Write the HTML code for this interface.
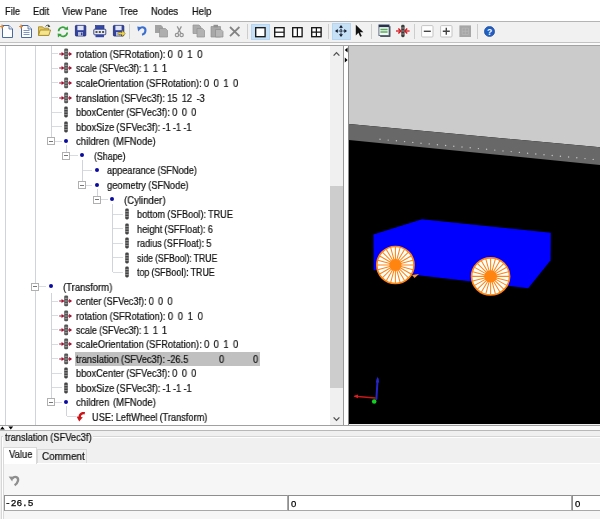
<!DOCTYPE html>
<html><head><meta charset="utf-8"><title>X3D-Edit</title>
<style>
html,body{margin:0;padding:0}
body{width:600px;height:519px;overflow:hidden;background:#f0f0f0;position:relative;font-family:"Liberation Sans",sans-serif;color:#000}
.abs{position:absolute}
.t{-webkit-text-stroke:.22px #111;will-change:transform;position:absolute;white-space:pre;font-size:10.6px;line-height:14px;height:14px;transform-origin:0 50%;transform:scaleX(0.875);color:#111}
.m{-webkit-text-stroke:.22px #111;will-change:transform;position:absolute;white-space:pre;font-size:10.5px;line-height:14px;height:14px;top:3.6px;transform-origin:0 50%;transform:scaleX(.895);color:#111}
.vl{position:absolute;width:1px;background:#d0d4da}
.hl{position:absolute;height:1px;background:#d8dbe0}
.ex{position:absolute;width:6px;height:6px;border:1px solid #b0b0b0;background:#fff}
.ex i{position:absolute;left:1px;top:2.5px;width:4px;height:1px;background:#777}
.bl{position:absolute;width:4px;height:4px;border-radius:50%;background:#0a0aa0}
</style></head>
<body>
<div class="abs" style="left:0;top:0;width:600px;height:21px;background:#fff"></div>
<span class="m" style="left:5px">File</span>
<span class="m" style="left:33px">Edit</span>
<span class="m" style="left:62px">View Pane</span>
<span class="m" style="left:119px">Tree</span>
<span class="m" style="left:151px">Nodes</span>
<span class="m" style="left:192px">Help</span>
<div class="abs" style="left:0;top:21px;width:600px;height:1px;background:#b4b4b4"></div>
<div class="abs" style="left:0;top:22px;width:600px;height:20px;background:#f1f1f1"></div>
<div class="abs" style="left:0;top:42px;width:600px;height:1px;background:#c2c2c2"></div>
<div class="abs" style="left:0;top:43px;width:600px;height:2px;background:#fafafa"></div>
<div class="abs" style="left:0;top:45px;width:600px;height:1px;background:#a2a2a2"></div>
<svg class="abs" style="left:0px;top:24.1px" width="14" height="15" viewBox="0 0 14 15"><path d="M2.5 1.5H9L12.5 5V13.5H2.5Z" fill="#fdfdff" stroke="#4a6a9c" stroke-width="1"/><path d="M9 1.5V5H12.5" fill="#dfe8f6" stroke="#4a6a9c" stroke-width=".8"/><path d="M0 2.5H4M2 .5V4.5" stroke="#e08a3c" stroke-width="1.2"/></svg>
<svg class="abs" style="left:18.5px;top:24.1px" width="14" height="15" viewBox="0 0 14 15"><path d="M2.5 1.5H9L12.5 5V13.5H2.5Z" fill="#fdfdff" stroke="#4a6a9c" stroke-width="1"/><path d="M9 1.5V5H12.5" fill="#dfe8f6" stroke="#4a6a9c" stroke-width=".8"/><path d="M4.5 6.5H10.5M4.5 8.5H10.5M4.5 10.5H10.5" stroke="#7f97c4" stroke-width="1"/><path d="M0 2.5H4M2 .5V4.5" stroke="#e08a3c" stroke-width="1.2"/></svg>
<svg class="abs" style="left:37px;top:23.3px" width="15" height="15" viewBox="0 0 15 15"><path d="M1.5 3.8H5.6L6.8 5.2H11.6V12.4H1.5Z" fill="#e6c858" stroke="#a89030" stroke-width=".9"/><path d="M1.5 12.4L3.2 7H13.6L11.8 12.4Z" fill="#f6e48c" stroke="#a08828" stroke-width=".9"/><path d="M8.6 3.4C9.6 2 11.4 1.8 12.4 3" stroke="#304030" stroke-width="1" fill="none"/><path d="M11.4 1.6L13.4 3.8L10.8 4Z" fill="#304030"/></svg>
<svg class="abs" style="left:55.5px;top:24.0px" width="14" height="15" viewBox="0 0 14 15"><path d="M2.6 7.2A4.1 4.1 0 0 1 9.8 4.6" stroke="#36a43c" stroke-width="1.7" fill="none"/><path d="M8 5.6L12.2 6L11.8 2.2Z" fill="#36a43c"/><path d="M11.2 8.4A4.1 4.1 0 0 1 4 11" stroke="#36a43c" stroke-width="1.7" fill="none"/><path d="M5.8 10L1.6 9.6L2 13.4Z" fill="#36a43c"/></svg>
<svg class="abs" style="left:74px;top:23.3px" width="14" height="15" viewBox="0 0 14 15"><rect x="1.4" y="2.4" width="10.4" height="10.6" rx=".8" fill="#33429c" stroke="#1c2870" stroke-width=".8"/><rect x="3.4" y="2.8" width="6.2" height="4.4" fill="#dfe5f7"/><rect x="4" y="9" width="5" height="3.8" fill="#b8c0da"/><rect x="7" y="9.6" width="1.4" height="2.6" fill="#33429c"/></svg>
<svg class="abs" style="left:92.5px;top:24.3px" width="14" height="15" viewBox="0 0 14 15"><rect x="2.5" y="1.5" width="8.5" height="4" fill="#3548a8" stroke="#1c2a74" stroke-width=".6"/><rect x="0.8" y="5.2" width="12" height="5.6" rx=".8" fill="#e9ebf3" stroke="#2b3a84" stroke-width=".9"/><path d="M2.5 8H4.5M5.8 8H7.8M9.1 8H11.1" stroke="#222" stroke-width="1.4"/><rect x="2.5" y="10.8" width="8.5" height="2.4" fill="#3548a8"/></svg>
<svg class="abs" style="left:111.5px;top:23.3px" width="14" height="15" viewBox="0 0 14 15"><rect x="1.4" y="2.4" width="10.4" height="10.6" rx=".8" fill="#33429c" stroke="#1c2870" stroke-width=".8"/><rect x="3.4" y="2.8" width="6.2" height="4.4" fill="#dfe5f7"/><rect x="4" y="9" width="5" height="3.8" fill="#b8c0da"/><rect x="7" y="9.6" width="1.4" height="2.6" fill="#33429c"/><path d="M6 9.6H10V7.6L13.4 10.6L10 13.6V11.6H6Z" fill="#f2d648" stroke="#8a7418" stroke-width=".5"/></svg>
<div class="abs" style="left:129.3px;top:24px;width:1px;height:15px;background:#cdcdcd"></div>
<svg class="abs" style="left:135.5px;top:24.3px" width="12" height="13" viewBox="0 0 12 13"><path d="M3.6 4.6C6 2 10 3.6 9.4 7.2C9.1 9 7.8 10.4 6 10.8" stroke="#3a6fd0" stroke-width="2.1" fill="none"/><path d="M1.2 2.6L6 3.2L2.2 7.4Z" fill="#3a6fd0"/></svg>
<svg class="abs" style="left:153.5px;top:24.3px" width="15" height="14" viewBox="0 0 15 14"><path d="M1 1H7L9 3V9H1Z" fill="#a2a2a2"/><path d="M5.5 4.5H11.5L13.5 6.5V13H5.5Z" fill="#aeaeae" stroke="#929292" stroke-width=".7"/></svg>
<svg class="abs" style="left:174px;top:24.9px" width="11" height="14" viewBox="0 0 11 14"><path d="M3.2 1.4L6.8 8M7.4 1.4L3.8 8" stroke="#949494" stroke-width="1.3"/><circle cx="3" cy="10" r="1.7" fill="none" stroke="#949494" stroke-width="1.2"/><circle cx="7.6" cy="10" r="1.7" fill="none" stroke="#949494" stroke-width="1.2"/></svg>
<svg class="abs" style="left:191.5px;top:24.3px" width="14" height="14" viewBox="0 0 14 14"><path d="M1 1H7L9 3V9.5H1Z" fill="#acacac" stroke="#929292" stroke-width=".7"/><path d="M5 4.5H10.5L12.5 6.5V13H5Z" fill="#b2b2b2" stroke="#909090" stroke-width=".7"/></svg>
<svg class="abs" style="left:209.5px;top:24.3px" width="14" height="14" viewBox="0 0 14 14"><path d="M1 2.5H10.5V13H1Z" fill="#a8a8a8" stroke="#909090" stroke-width=".7"/><rect x="3.5" y=".8" width="4.5" height="2.6" fill="#909090"/><path d="M5.5 5.5H11L13 7.5V13H5.5Z" fill="#b6b6b6" stroke="#8c8c8c" stroke-width=".7"/></svg>
<svg class="abs" style="left:229px;top:26.2px" width="12" height="12" viewBox="0 0 12 12"><path d="M1 1L10.4 10.2M10.4 1L1 10.2" stroke="#848484" stroke-width="1.8"/></svg>
<div class="abs" style="left:247px;top:24px;width:1px;height:15px;background:#cdcdcd"></div>
<div class="abs" style="left:250.8px;top:23.5px;width:18.8px;height:16.8px;background:#c6e0f6;border:1px solid #b4d6f2;box-sizing:border-box"></div>
<svg class="abs" style="left:255px;top:26.5px" width="11" height="11" viewBox="0 0 11 11"><rect x=".7" y=".7" width="9.4" height="9" fill="#fff" stroke="#161616" stroke-width="1.35"/></svg>
<svg class="abs" style="left:273.6px;top:26.5px" width="11" height="11" viewBox="0 0 11 11"><rect x=".7" y=".7" width="9.4" height="9" fill="#fff" stroke="#161616" stroke-width="1.35"/><path d="M.7 5.2H10.1" stroke="#161616" stroke-width="1.2"/></svg>
<svg class="abs" style="left:292px;top:26.5px" width="11" height="11" viewBox="0 0 11 11"><rect x=".7" y=".7" width="9.4" height="9" fill="#fff" stroke="#161616" stroke-width="1.35"/><path d="M5.4 .7V9.7" stroke="#161616" stroke-width="1.2"/></svg>
<svg class="abs" style="left:310.8px;top:26.5px" width="11" height="11" viewBox="0 0 11 11"><rect x=".7" y=".7" width="9.4" height="9" fill="#fff" stroke="#161616" stroke-width="1.35"/><path d="M5.4 .7V9.7M.7 5.2H10.1" stroke="#161616" stroke-width="1.2"/></svg>
<div class="abs" style="left:327.8px;top:24px;width:1px;height:15px;background:#cdcdcd"></div>
<div class="abs" style="left:332px;top:23.4px;width:18.6px;height:16.8px;background:#c6e0f6;border:1px solid #b4d6f2;box-sizing:border-box"></div>
<svg class="abs" style="left:335px;top:24.7px" width="12" height="12" viewBox="0 0 12 12"><path d="M6 2V10M2 6H10" stroke="#141c30" stroke-width="1.2" stroke-dasharray="1.3 .8"/><path d="M6 0L8 2.7H4ZM6 12L8 9.3H4ZM0 6L2.7 4V8ZM12 6L9.3 4V8Z" fill="#141c30"/></svg>
<svg class="abs" style="left:355px;top:24.3px" width="9" height="14" viewBox="0 0 9 14"><path d="M.8 .8V11.4L3.4 8.8L5.2 12.8L6.8 12L5 8.2H8.4Z" fill="#111"/></svg>
<div class="abs" style="left:371.2px;top:24px;width:1px;height:15px;background:#cdcdcd"></div>
<svg class="abs" style="left:377.5px;top:24.3px" width="13" height="14" viewBox="0 0 13 14"><rect x="2.2" y="2.2" width="10.2" height="10.6" fill="#2c3440"/><rect x=".9" y=".9" width="10.2" height="10.6" fill="#f2f5f2" stroke="#56657a" stroke-width=".9"/><rect x=".9" y=".9" width="10.2" height="2.2" fill="#27324c"/><path d="M2.4 5.4H9.6M2.4 8H9.6" stroke="#58ae60" stroke-width="1.5"/></svg>
<svg class="abs" style="left:395.5px;top:24.3px" width="14" height="14" viewBox="0 0 14 14"><path d="M0 7H13.6" stroke="#d8141c" stroke-width="1.3"/><path d="M2.4 4.6L4.8 7L2.4 9.4M11.2 4.6L8.8 7L11.2 9.4" stroke="#d8141c" stroke-width="1.4" fill="none"/><rect x="5.2" y=".8" width="3.4" height="12.4" rx="1.4" fill="#3c3c3c"/><path d="M5.2 4H8.6M5.2 7H8.6M5.2 10H8.6" stroke="#a8a8a8" stroke-width=".8"/></svg>
<div class="abs" style="left:414.3px;top:24px;width:1px;height:15px;background:#cdcdcd"></div>
<svg class="abs" style="left:420.5px;top:24.8px" width="13" height="13" viewBox="0 0 13 13"><rect x=".6" y=".6" width="11.4" height="11.4" rx="1" fill="#fdfdfd" stroke="#c4c4c4" stroke-width="1"/><path d="M2.8 6.3H9.8" stroke="#444" stroke-width="1.4"/></svg>
<svg class="abs" style="left:439.5px;top:24.8px" width="13" height="13" viewBox="0 0 13 13"><rect x=".6" y=".6" width="11.4" height="11.4" rx="1" fill="#fdfdfd" stroke="#c4c4c4" stroke-width="1"/><path d="M2.8 6.3H9.8M6.3 2.8V9.8" stroke="#444" stroke-width="1.4"/></svg>
<svg class="abs" style="left:458.5px;top:24.8px" width="13" height="13" viewBox="0 0 13 13"><rect x=".4" y=".4" width="11.6" height="11.6" fill="#a6a6a6"/><path d="M3.2 6.3H9.4M6.3 3.2V9.4M3.2 3.2H9.4V9.4H3.2Z" stroke="#b8b8b8" stroke-width=".8" fill="none"/></svg>
<div class="abs" style="left:476.8px;top:24px;width:1px;height:15px;background:#cdcdcd"></div>
<svg class="abs" style="left:484px;top:26px" width="11" height="11" viewBox="0 0 11 11"><circle cx="5.5" cy="5.5" r="5.1" fill="#1f5fc4" stroke="#123c8c" stroke-width=".6"/><text x="5.5" y="8.6" font-family="Liberation Sans,sans-serif" font-size="8.5" font-weight="bold" fill="#fff" text-anchor="middle">?</text></svg>
<div class="abs" style="left:0;top:46px;width:344px;height:379px;background:#fff"></div>
<div class="vl" style="left:5px;top:46.0px;height:379.0px"></div>
<div class="vl" style="left:35px;top:46.0px;height:236.5px"></div>
<div class="vl" style="left:35px;top:290.5px;height:134.5px"></div>
<div class="vl" style="left:51px;top:46.0px;height:91.3px"></div>
<div class="vl" style="left:51px;top:292.5px;height:105.5px"></div>
<div class="vl" style="left:66px;top:145.3px;height:6.6px"></div>
<div class="vl" style="left:82px;top:159.9px;height:21.1px"></div>
<div class="vl" style="left:97px;top:189.0px;height:6.5px"></div>
<div class="vl" style="left:112px;top:203.5px;height:68.5px"></div>
<div class="vl" style="left:66px;top:406.1px;height:10.4px"></div>
<div class="hl" style="left:52px;top:53.2px;width:6px"></div>
<svg class="abs" style="left:58.3px;top:47.8px" width="14" height="12" viewBox="0 0 14 12"><path d="M1.2 6H13.4" stroke="#a81634" stroke-width="1.1"/><path d="M3.6 3.8L6 6L3.6 8.2ZM11.2 3.8L13.8 6L11.2 8.2Z" fill="#a01030"/><rect x="6.2" y="0.5" width="3.9" height="10.8" rx="1.3" fill="#555"/><path d="M6.7 3.3H9.6M6.7 6H9.6M6.7 8.7H9.6" stroke="#b4b4b4" stroke-width=".8"/></svg>
<span class="t" style="left:76.3px;top:46.8px;transform:scaleX(0.885);word-spacing:-0.33px">rotation (SFRotation): 0  0  1  0</span>
<div class="hl" style="left:52px;top:67.8px;width:6px"></div>
<svg class="abs" style="left:58.3px;top:62.3px" width="14" height="12" viewBox="0 0 14 12"><path d="M1.2 6H13.4" stroke="#a81634" stroke-width="1.1"/><path d="M3.6 3.8L6 6L3.6 8.2ZM11.2 3.8L13.8 6L11.2 8.2Z" fill="#a01030"/><rect x="6.2" y="0.5" width="3.9" height="10.8" rx="1.3" fill="#555"/><path d="M6.7 3.3H9.6M6.7 6H9.6M6.7 8.7H9.6" stroke="#b4b4b4" stroke-width=".8"/></svg>
<span class="t" style="left:76.3px;top:61.3px;transform:scaleX(0.847);word-spacing:-0.45px">scale (SFVec3f): 1  1  1</span>
<div class="hl" style="left:52px;top:82.4px;width:6px"></div>
<svg class="abs" style="left:58.3px;top:76.9px" width="14" height="12" viewBox="0 0 14 12"><path d="M1.2 6H13.4" stroke="#a81634" stroke-width="1.1"/><path d="M3.6 3.8L6 6L3.6 8.2ZM11.2 3.8L13.8 6L11.2 8.2Z" fill="#a01030"/><rect x="6.2" y="0.5" width="3.9" height="10.8" rx="1.3" fill="#555"/><path d="M6.7 3.3H9.6M6.7 6H9.6M6.7 8.7H9.6" stroke="#b4b4b4" stroke-width=".8"/></svg>
<span class="t" style="left:76.3px;top:75.9px;transform:scaleX(0.885);word-spacing:-0.42px">scaleOrientation (SFRotation): 0  0  1  0</span>
<div class="hl" style="left:52px;top:97.0px;width:6px"></div>
<svg class="abs" style="left:58.3px;top:91.5px" width="14" height="12" viewBox="0 0 14 12"><path d="M1.2 6H13.4" stroke="#a81634" stroke-width="1.1"/><path d="M3.6 3.8L6 6L3.6 8.2ZM11.2 3.8L13.8 6L11.2 8.2Z" fill="#a01030"/><rect x="6.2" y="0.5" width="3.9" height="10.8" rx="1.3" fill="#555"/><path d="M6.7 3.3H9.6M6.7 6H9.6M6.7 8.7H9.6" stroke="#b4b4b4" stroke-width=".8"/></svg>
<span class="t" style="left:76.3px;top:90.5px;transform:scaleX(0.876);word-spacing:-0.45px">translation (SFVec3f): 15  12  -3</span>
<div class="hl" style="left:52px;top:111.6px;width:10px"></div>
<svg class="abs" style="left:63.6px;top:106.1px" width="4" height="12" viewBox="0 0 4 12"><rect x="0.2" y="0.6" width="3.6" height="10.8" rx="1.4" fill="#444"/><path d="M0.2 3.4H3.8M0.2 6H3.8M0.2 8.6H3.8" stroke="#b0b0b0" stroke-width=".8"/></svg>
<span class="t" style="left:76.3px;top:105.1px;transform:scaleX(0.876);word-spacing:-0.45px">bboxCenter (SFVec3f): 0  0  0</span>
<div class="hl" style="left:52px;top:126.2px;width:10px"></div>
<svg class="abs" style="left:63.6px;top:120.7px" width="4" height="12" viewBox="0 0 4 12"><rect x="0.2" y="0.6" width="3.6" height="10.8" rx="1.4" fill="#444"/><path d="M0.2 3.4H3.8M0.2 6H3.8M0.2 8.6H3.8" stroke="#b0b0b0" stroke-width=".8"/></svg>
<span class="t" style="left:76.3px;top:119.7px;transform:scaleX(0.876);word-spacing:-0.45px">bboxSize (SFVec3f): -1 -1 -1</span>
<div class="hl" style="left:55px;top:140.8px;width:7px"></div>
<div class="ex" style="left:47.3px;top:137.3px"><i></i></div>
<div class="bl" style="left:64.4px;top:138.8px"></div>
<span class="t" style="left:76.3px;top:134.3px;transform:scaleX(0.898);word-spacing:1.00px">children (MFNode)</span>
<div class="hl" style="left:70px;top:155.4px;width:8px"></div>
<div class="ex" style="left:62.4px;top:151.9px"><i></i></div>
<div class="bl" style="left:80.0px;top:153.4px"></div>
<span class="t" style="left:93.6px;top:148.9px;transform:scaleX(0.833)">(Shape)</span>
<div class="hl" style="left:83px;top:169.9px;width:9px"></div>
<div class="bl" style="left:95.0px;top:167.9px"></div>
<span class="t" style="left:106.8px;top:163.4px;transform:scaleX(0.861);word-spacing:-0.45px">appearance (SFNode)</span>
<div class="hl" style="left:86px;top:184.5px;width:6px"></div>
<div class="ex" style="left:77.8px;top:181.0px"><i></i></div>
<div class="bl" style="left:95.0px;top:182.5px"></div>
<span class="t" style="left:106.8px;top:178.0px;transform:scaleX(0.882);word-spacing:-0.45px">geometry (SFNode)</span>
<div class="hl" style="left:101px;top:199.0px;width:7px"></div>
<div class="ex" style="left:93.0px;top:195.5px"><i></i></div>
<div class="bl" style="left:110.4px;top:197.0px"></div>
<span class="t" style="left:124.2px;top:192.5px;transform:scaleX(0.904)">(Cylinder)</span>
<div class="hl" style="left:113px;top:213.5px;width:10px"></div>
<svg class="abs" style="left:125.3px;top:208.0px" width="4" height="12" viewBox="0 0 4 12"><rect x="0.2" y="0.6" width="3.6" height="10.8" rx="1.4" fill="#444"/><path d="M0.2 3.4H3.8M0.2 6H3.8M0.2 8.6H3.8" stroke="#b0b0b0" stroke-width=".8"/></svg>
<span class="t" style="left:137.4px;top:207.0px;transform:scaleX(0.866);word-spacing:-0.45px">bottom (SFBool): TRUE</span>
<div class="hl" style="left:113px;top:228.1px;width:10px"></div>
<svg class="abs" style="left:125.3px;top:222.6px" width="4" height="12" viewBox="0 0 4 12"><rect x="0.2" y="0.6" width="3.6" height="10.8" rx="1.4" fill="#444"/><path d="M0.2 3.4H3.8M0.2 6H3.8M0.2 8.6H3.8" stroke="#b0b0b0" stroke-width=".8"/></svg>
<span class="t" style="left:137.4px;top:221.6px;transform:scaleX(0.874);word-spacing:-0.45px">height (SFFloat): 6</span>
<div class="hl" style="left:113px;top:242.6px;width:10px"></div>
<svg class="abs" style="left:125.3px;top:237.1px" width="4" height="12" viewBox="0 0 4 12"><rect x="0.2" y="0.6" width="3.6" height="10.8" rx="1.4" fill="#444"/><path d="M0.2 3.4H3.8M0.2 6H3.8M0.2 8.6H3.8" stroke="#b0b0b0" stroke-width=".8"/></svg>
<span class="t" style="left:137.4px;top:236.1px;transform:scaleX(0.856);word-spacing:-0.45px">radius (SFFloat): 5</span>
<div class="hl" style="left:113px;top:257.1px;width:10px"></div>
<svg class="abs" style="left:125.3px;top:251.6px" width="4" height="12" viewBox="0 0 4 12"><rect x="0.2" y="0.6" width="3.6" height="10.8" rx="1.4" fill="#444"/><path d="M0.2 3.4H3.8M0.2 6H3.8M0.2 8.6H3.8" stroke="#b0b0b0" stroke-width=".8"/></svg>
<span class="t" style="left:137.4px;top:250.6px;transform:scaleX(0.821);word-spacing:-0.45px">side (SFBool): TRUE</span>
<div class="hl" style="left:113px;top:271.6px;width:10px"></div>
<svg class="abs" style="left:125.3px;top:266.1px" width="4" height="12" viewBox="0 0 4 12"><rect x="0.2" y="0.6" width="3.6" height="10.8" rx="1.4" fill="#444"/><path d="M0.2 3.4H3.8M0.2 6H3.8M0.2 8.6H3.8" stroke="#b0b0b0" stroke-width=".8"/></svg>
<span class="t" style="left:137.4px;top:265.1px;transform:scaleX(0.834);word-spacing:-0.45px">top (SFBool): TRUE</span>
<div class="hl" style="left:39px;top:286.0px;width:7px"></div>
<div class="ex" style="left:31.3px;top:282.5px"><i></i></div>
<div class="bl" style="left:48.8px;top:284.0px"></div>
<span class="t" style="left:63px;top:279.5px;transform:scaleX(0.897)">(Transform)</span>
<div class="hl" style="left:52px;top:300.5px;width:6px"></div>
<svg class="abs" style="left:58.3px;top:295.0px" width="14" height="12" viewBox="0 0 14 12"><path d="M1.2 6H13.4" stroke="#a81634" stroke-width="1.1"/><path d="M3.6 3.8L6 6L3.6 8.2ZM11.2 3.8L13.8 6L11.2 8.2Z" fill="#a01030"/><rect x="6.2" y="0.5" width="3.9" height="10.8" rx="1.3" fill="#555"/><path d="M6.7 3.3H9.6M6.7 6H9.6M6.7 8.7H9.6" stroke="#b4b4b4" stroke-width=".8"/></svg>
<span class="t" style="left:76.3px;top:294.0px;transform:scaleX(0.861);word-spacing:-0.45px">center (SFVec3f): 0  0  0</span>
<div class="hl" style="left:52px;top:315.0px;width:6px"></div>
<svg class="abs" style="left:58.3px;top:309.5px" width="14" height="12" viewBox="0 0 14 12"><path d="M1.2 6H13.4" stroke="#a81634" stroke-width="1.1"/><path d="M3.6 3.8L6 6L3.6 8.2ZM11.2 3.8L13.8 6L11.2 8.2Z" fill="#a01030"/><rect x="6.2" y="0.5" width="3.9" height="10.8" rx="1.3" fill="#555"/><path d="M6.7 3.3H9.6M6.7 6H9.6M6.7 8.7H9.6" stroke="#b4b4b4" stroke-width=".8"/></svg>
<span class="t" style="left:76.3px;top:308.5px;transform:scaleX(0.885);word-spacing:-0.27px">rotation (SFRotation): 0  0  1  0</span>
<div class="hl" style="left:52px;top:329.4px;width:6px"></div>
<svg class="abs" style="left:58.3px;top:323.9px" width="14" height="12" viewBox="0 0 14 12"><path d="M1.2 6H13.4" stroke="#a81634" stroke-width="1.1"/><path d="M3.6 3.8L6 6L3.6 8.2ZM11.2 3.8L13.8 6L11.2 8.2Z" fill="#a01030"/><rect x="6.2" y="0.5" width="3.9" height="10.8" rx="1.3" fill="#555"/><path d="M6.7 3.3H9.6M6.7 6H9.6M6.7 8.7H9.6" stroke="#b4b4b4" stroke-width=".8"/></svg>
<span class="t" style="left:76.3px;top:322.9px;transform:scaleX(0.847);word-spacing:-0.45px">scale (SFVec3f): 1  1  1</span>
<div class="hl" style="left:52px;top:343.9px;width:6px"></div>
<svg class="abs" style="left:58.3px;top:338.4px" width="14" height="12" viewBox="0 0 14 12"><path d="M1.2 6H13.4" stroke="#a81634" stroke-width="1.1"/><path d="M3.6 3.8L6 6L3.6 8.2ZM11.2 3.8L13.8 6L11.2 8.2Z" fill="#a01030"/><rect x="6.2" y="0.5" width="3.9" height="10.8" rx="1.3" fill="#555"/><path d="M6.7 3.3H9.6M6.7 6H9.6M6.7 8.7H9.6" stroke="#b4b4b4" stroke-width=".8"/></svg>
<span class="t" style="left:76.3px;top:337.4px;transform:scaleX(0.885);word-spacing:-0.40px">scaleOrientation (SFRotation): 0  0  1  0</span>
<div class="hl" style="left:52px;top:358.3px;width:6px"></div>
<svg class="abs" style="left:58.3px;top:352.8px" width="14" height="12" viewBox="0 0 14 12"><path d="M1.2 6H13.4" stroke="#a81634" stroke-width="1.1"/><path d="M3.6 3.8L6 6L3.6 8.2ZM11.2 3.8L13.8 6L11.2 8.2Z" fill="#a01030"/><rect x="6.2" y="0.5" width="3.9" height="10.8" rx="1.3" fill="#555"/><path d="M6.7 3.3H9.6M6.7 6H9.6M6.7 8.7H9.6" stroke="#b4b4b4" stroke-width=".8"/></svg>
<div class="abs" style="left:75px;top:352.4px;width:184.5px;height:13.2px;background:#c0c0c0"></div>
<span class="t" style="left:76.3px;top:351.8px;transform:scaleX(0.877);word-spacing:-0.45px">translation (SFVec3f): -26.5</span>
<span class="t" style="left:219px;top:351.8px">0</span>
<span class="t" style="left:252.5px;top:351.8px">0</span>
<div class="hl" style="left:52px;top:372.7px;width:10px"></div>
<svg class="abs" style="left:63.6px;top:367.2px" width="4" height="12" viewBox="0 0 4 12"><rect x="0.2" y="0.6" width="3.6" height="10.8" rx="1.4" fill="#444"/><path d="M0.2 3.4H3.8M0.2 6H3.8M0.2 8.6H3.8" stroke="#b0b0b0" stroke-width=".8"/></svg>
<span class="t" style="left:76.3px;top:366.2px;transform:scaleX(0.876);word-spacing:-0.45px">bboxCenter (SFVec3f): 0  0  0</span>
<div class="hl" style="left:52px;top:387.2px;width:10px"></div>
<svg class="abs" style="left:63.6px;top:381.7px" width="4" height="12" viewBox="0 0 4 12"><rect x="0.2" y="0.6" width="3.6" height="10.8" rx="1.4" fill="#444"/><path d="M0.2 3.4H3.8M0.2 6H3.8M0.2 8.6H3.8" stroke="#b0b0b0" stroke-width=".8"/></svg>
<span class="t" style="left:76.3px;top:380.7px;transform:scaleX(0.877);word-spacing:-0.45px">bboxSize (SFVec3f): -1 -1 -1</span>
<div class="hl" style="left:55px;top:401.6px;width:7px"></div>
<div class="ex" style="left:47.3px;top:398.1px"><i></i></div>
<div class="bl" style="left:64.4px;top:399.6px"></div>
<span class="t" style="left:76.3px;top:395.1px;transform:scaleX(0.900);word-spacing:1.00px">children (MFNode)</span>
<div class="hl" style="left:67px;top:416.0px;width:9px"></div>
<svg class="abs" style="left:76.4px;top:411.9px" width="10" height="10" viewBox="0 0 10 10"><path d="M8.8 1.2C5.6 0.6 3.2 2.8 3.8 5.8" stroke="#cc1418" stroke-width="2.5" fill="none"/><path d="M0.6 4.4L6.8 5.2L3.2 9.6Z" fill="#cc1418"/></svg>
<span class="t" style="left:91.6px;top:409.5px;transform:scaleX(0.872);word-spacing:-0.45px">USE: LeftWheel (Transform)</span>
<div class="abs" style="left:330px;top:46px;width:13px;height:379px;background:#f0f0f0"></div>
<div class="abs" style="left:330px;top:186px;width:13px;height:202px;background:#cdcdcd"></div>
<svg class="abs" style="left:330px;top:47px" width="13" height="14" viewBox="0 0 13 14"><path d="M3.6 8.6L6.5 5.6L9.4 8.6" stroke="#505050" stroke-width="1.3" fill="none"/></svg>
<svg class="abs" style="left:330px;top:412.3px" width="13" height="14" viewBox="0 0 13 14"><path d="M3.6 5.4L6.5 8.4L9.4 5.4" stroke="#505050" stroke-width="1.3" fill="none"/></svg>
<div class="abs" style="left:343px;top:46px;width:1px;height:380px;background:#9a9a9a"></div>
<div class="abs" style="left:344px;top:46px;width:4px;height:380px;background:#fff"></div>
<div class="abs" style="left:348px;top:46px;width:1px;height:380px;background:#8a8a8a"></div>
<svg class="abs" style="left:344px;top:46.3px" width="5" height="20" viewBox="0 0 5 20"><path d="M3.6 1.6V6.4L0.8 4ZM0.8 11.6V16.4L3.6 14Z" fill="#000"/></svg>
<svg class="abs" style="left:349px;top:46px" width="251" height="378" viewBox="0 0 251 378">
<rect width="251" height="378" fill="#000"/>
<polygon points="0,0 251,0 251,101.3 0,78.0" fill="#cbcbcb"/>
<polygon points="0,78.0 251,101.3 251,119.0 0,94.0" fill="#686868"/>
<g fill="#c8c8c8"><circle cx="31.0" cy="93.3" r=".7"/><circle cx="39.2" cy="94.1" r=".7"/><circle cx="47.4" cy="94.8" r=".7"/><circle cx="55.6" cy="95.6" r=".7"/><circle cx="63.8" cy="96.4" r=".7"/><circle cx="72.0" cy="97.2" r=".7"/><circle cx="80.2" cy="97.9" r=".7"/><circle cx="88.4" cy="98.7" r=".7"/><circle cx="96.6" cy="99.5" r=".7"/><circle cx="104.8" cy="100.2" r=".7"/><circle cx="113.0" cy="101.0" r=".7"/><circle cx="121.2" cy="101.8" r=".7"/><circle cx="129.4" cy="102.6" r=".7"/><circle cx="137.6" cy="103.3" r=".7"/><circle cx="145.8" cy="104.1" r=".7"/><circle cx="154.0" cy="104.9" r=".7"/><circle cx="162.2" cy="105.6" r=".7"/><circle cx="170.4" cy="106.4" r=".7"/><circle cx="178.6" cy="107.2" r=".7"/><circle cx="186.8" cy="108.0" r=".7"/><circle cx="195.0" cy="108.7" r=".7"/><circle cx="203.2" cy="109.5" r=".7"/><circle cx="211.4" cy="110.3" r=".7"/><circle cx="219.6" cy="111.0" r=".7"/><circle cx="227.8" cy="111.8" r=".7"/><circle cx="236.0" cy="112.6" r=".7"/><circle cx="244.2" cy="113.4" r=".7"/></g>
<polygon points="73.0,173.3 24.4,188.6 24.6,224.0 179.2,242.2 201.6,214.3 201.8,186.8" fill="#0000fe"/>
<g transform="translate(46.4,219.0)"><ellipse rx="18.6" ry="18.5" fill="#fff" stroke="#ff8410" stroke-width="1.7"/><path d="M0 0L18.1 0.0M0 0L17.5 4.7M0 0L15.7 9.0M0 0L12.8 12.7M0 0L9.1 15.6M0 0L4.7 17.4M0 0L0.0 18.0M0 0L-4.7 17.4M0 0L-9.0 15.6M0 0L-12.8 12.7M0 0L-15.7 9.0M0 0L-17.5 4.7M0 0L-18.1 0.0M0 0L-17.5 -4.7M0 0L-15.7 -9.0M0 0L-12.8 -12.7M0 0L-9.1 -15.6M0 0L-4.7 -17.4M0 0L-0.0 -18.0M0 0L4.7 -17.4M0 0L9.1 -15.6M0 0L12.8 -12.7M0 0L15.7 -9.0M0 0L17.5 -4.7" stroke="#ff8410" stroke-width="1.05" fill="none"/><ellipse rx="6.1" ry="6.1" fill="#ff8410"/></g>
<g transform="translate(141.6,230.4)"><ellipse rx="19" ry="18.6" fill="#fff" stroke="#ff8410" stroke-width="1.7"/><path d="M0 0L18.5 0.0M0 0L17.9 4.7M0 0L16.0 9.0M0 0L13.1 12.8M0 0L9.3 15.7M0 0L4.8 17.5M0 0L0.0 18.1M0 0L-4.8 17.5M0 0L-9.2 15.7M0 0L-13.1 12.8M0 0L-16.0 9.0M0 0L-17.9 4.7M0 0L-18.5 0.0M0 0L-17.9 -4.7M0 0L-16.0 -9.0M0 0L-13.1 -12.8M0 0L-9.3 -15.7M0 0L-4.8 -17.5M0 0L-0.0 -18.1M0 0L4.8 -17.5M0 0L9.3 -15.7M0 0L13.1 -12.8M0 0L16.0 -9.1M0 0L17.9 -4.7" stroke="#ff8410" stroke-width="1.05" fill="none"/><ellipse rx="6.3" ry="6.1" fill="#ff8410"/></g>
<polygon points="63.0,229.0 70.0,228.0 65.5,232.0" fill="#ff9a30"/>
<path d="M27.4 353.0L28.6 333.0" stroke="#2424c8" stroke-width="2" stroke-linecap="round"/>
<path d="M28.6 330.4l1.7 6h-3.4z" fill="#2828c8"/>
<path d="M26.0 352.0L6.0 350.3" stroke="#c81818" stroke-width="1.6" stroke-linecap="round"/>
<path d="M4.5 350.2l4.5 -1.8v3.8z" fill="#d82020"/>
<circle cx="25.2" cy="355.5" r="2.3" fill="#10d020"/>
</svg>
<div class="abs" style="left:0;top:425px;width:600px;height:1px;background:#a0a0a0"></div>
<div class="abs" style="left:0;top:426px;width:600px;height:4px;background:#fdfdfd"></div>
<div class="abs" style="left:0;top:430px;width:600px;height:1px;background:#b8b8b8"></div>
<div class="abs" style="left:0;top:431px;width:600px;height:88px;background:#f0f0f0"></div>
<svg class="abs" style="left:0;top:425px" width="16" height="6" viewBox="0 0 16 6"><path d="M0 4.6H4.8L2.4 1.6ZM8.4 1.6H13.2L10.8 4.6Z" fill="#000"/></svg>
<div class="abs" style="left:1px;top:436.4px;width:610px;height:90px;border:1px solid #d6d6d6;box-sizing:border-box;box-shadow:1px 1px 0 #fff inset"></div>
<div class="abs" style="left:3px;top:431px;width:90px;height:13px;background:#f0f0f0"></div>
<span class="t" style="left:5px;top:429.6px">translation (SFVec3f)</span>
<div class="abs" style="left:3px;top:463px;width:610px;height:60px;background:#f6f6f6;border:1px solid #dadada;border-top-color:#fff;box-sizing:border-box"></div>
<div class="abs" style="left:37px;top:449px;width:50px;height:14px;background:#f0f0f0;border:1px solid #d9d9d9;border-bottom:none;box-sizing:border-box"></div>
<div class="abs" style="left:3px;top:447px;width:34px;height:17px;background:#fff;border:1px solid #d9d9d9;border-bottom:none;box-sizing:border-box"></div>
<span class="t" style="left:8.8px;top:447.2px;transform:scaleX(.89)">Value</span>
<span class="t" style="left:41.5px;top:448.8px;transform:scaleX(.93)">Comment</span>
<svg class="abs" style="left:8px;top:474px" width="12" height="13" viewBox="0 0 12 13"><path d="M4.4 4.6C6.6 1.6 10.8 3 10 6.8C9.6 8.6 8.6 10 6.6 11.2" stroke="#8e8e8e" stroke-width="2.3" fill="none"/><path d="M0.6 2.6L5.6 2.8L4.2 7.6Z" fill="#8e8e8e"/></svg>
<div class="abs" style="left:4px;top:494.5px;width:283.5px;height:16px;background:#fff;border:1px solid #8e8e8e;border-bottom-color:#a8a8a8;border-right-color:#a8a8a8;box-sizing:border-box"></div>
<span class="abs" style="left:5px;top:496.8px;font:9.5px/14px 'Liberation Mono',monospace;white-space:pre;color:#000;will-change:transform;-webkit-text-stroke:.25px #000">-26.5</span>
<div class="abs" style="left:287.5px;top:494.5px;width:284px;height:16px;background:#fff;border:1px solid #8e8e8e;border-bottom-color:#a8a8a8;border-right-color:#a8a8a8;box-sizing:border-box"></div>
<span class="abs" style="left:290.5px;top:496.8px;font:9.5px/14px 'Liberation Sans',sans-serif;white-space:pre;color:#000;will-change:transform;-webkit-text-stroke:.25px #000">0</span>
<div class="abs" style="left:571.5px;top:494.5px;width:40px;height:16px;background:#fff;border:1px solid #8e8e8e;border-bottom-color:#a8a8a8;border-right-color:#a8a8a8;box-sizing:border-box"></div>
<span class="abs" style="left:574.5px;top:496.8px;font:9.5px/14px 'Liberation Sans',sans-serif;white-space:pre;color:#000;will-change:transform;-webkit-text-stroke:.25px #000">0</span>
</body></html>
